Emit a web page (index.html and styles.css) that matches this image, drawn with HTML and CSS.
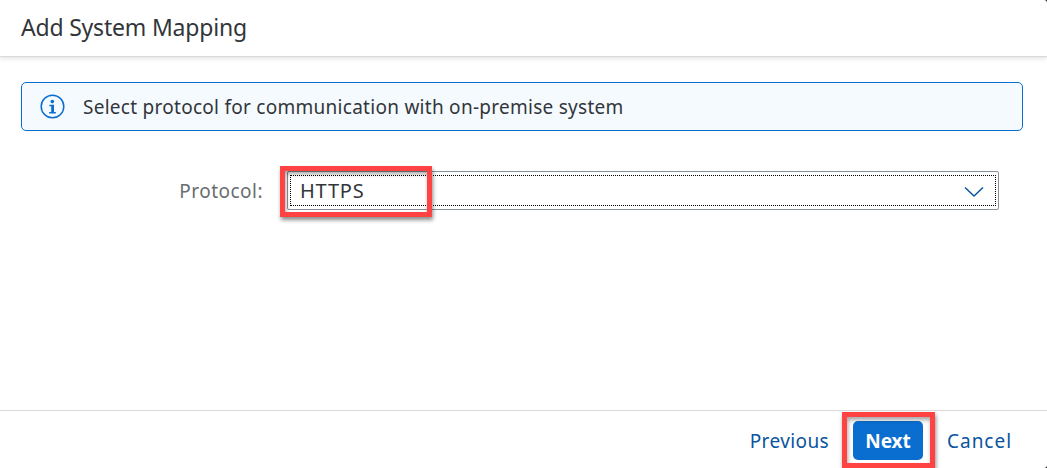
FILE: index.html
```html
<!DOCTYPE html>
<html lang="en">
<head>
<meta charset="utf-8">
<title>Add System Mapping</title>
<link rel="stylesheet" href="styles.css">
</head>
<body>
<div class="dialog">
  <header class="header"><h1 class="title">Add System Mapping</h1></header>
  <main class="content">
    <div class="message">
      <svg class="info-icon" viewBox="0 0 26 26"><circle cx="12.5" cy="12.5" r="11.3" fill="none" stroke="#0a6ed1" stroke-width="1.5"/><circle cx="12.3" cy="7.6" r="1.8" fill="#0a6ed1"/><path d="M9.4 10.7h4.6v7.2h1.8v1.5H9.2v-1.5h2v-5.7H9.4z" fill="#0a6ed1"/></svg>
      <span class="message-text">Select protocol for communication with on-premise system</span>
    </div>
    <div class="field">
      <span class="label">Protocol:</span>
      <div class="select">
        <div class="select-focus">
          <span class="value">HTTPS</span>
          <svg class="arrow" viewBox="0 0 20 12"><path d="M1 1.5l9 8.5 9-8.5" fill="none" stroke="#0854a0" stroke-width="1.5"/></svg>
        </div>
        <div class="mark mark-select"></div>
      </div>
    </div>
  </main>
  <footer class="footer">
    <button class="button previous">Previous</button>
    <button class="button next">Next<span class="mark mark-next"></span></button>
    <button class="button cancel">Cancel</button>
  </footer>
</div>
</body>
</html>
```
FILE: styles.css
```css
* { box-sizing: border-box; }
body { margin: 0; background: #222; color: #32363a; font-family: "Noto Sans", sans-serif; font-size: 19px; overflow: hidden; }
.dialog { height: 468px; display: flex; flex-direction: column; background: #fff; border-radius: 0 3px 3px 0; }
.header { height: 57px; padding: 11px 21px; border-bottom: 1px solid #d9d9d9; box-shadow: 0 2px 4px rgba(0,0,0,.1); }
.title { margin: 0; font-size: 23px; line-height: 33px; font-weight: 400; letter-spacing: -.2px; }
.content { flex: 1; padding: 25px 24px 0 21px; }
.message { height: 49px; display: flex; align-items: center; gap: 17px; padding-left: 18px; border: 1px solid #0a6ed1; border-radius: 5px; background: #f5faff; }
.message-text { letter-spacing: .27px; }
.info-icon { width: 26px; height: 26px; }
.field { display: flex; align-items: center; height: 39px; margin-top: 40px; }
.label { width: 242px; margin-right: 24px; text-align: right; color: #6a6d70; letter-spacing: .48px; }
.select { position: relative; width: 712px; height: 39px; padding: 3px 2px; border: 1px solid #89919a; border-radius: 2px; }
.select-focus { display: flex; align-items: center; justify-content: space-between; height: 100%; padding: 0 11px 0 9px; border: 1px dotted #000; }
.value { font-size: 20px; letter-spacing: .8px; }
.arrow { width: 20px; height: 12px; margin-top: 2px; }
.mark { position: absolute; border: 5px solid #ff4343; box-shadow: 1px 3px 4px rgba(0,0,0,.45), inset 1px 3px 4px rgba(0,0,0,.35); }
.mark-select { left: -8px; top: -6px; width: 152px; height: 51px; }
.footer { height: 58px; display: flex; align-items: center; padding: 1px 23px 0 0; justify-content: flex-end; border-top: 1px solid #d9d9d9; }
.button { border: 0; padding: 1px 12px 0; height: 39px; background: none; font: inherit; color: #0854a0; position: relative; }
.previous { letter-spacing: .4px; }
.cancel { letter-spacing: .97px; }
.next { width: 70px; background: #0a6ed1; color: #fff; font-weight: 700; border-radius: 5px; margin: 0 12px; }
.mark-next { left: -11px; top: -9px; width: 93px; height: 56px; }
```
